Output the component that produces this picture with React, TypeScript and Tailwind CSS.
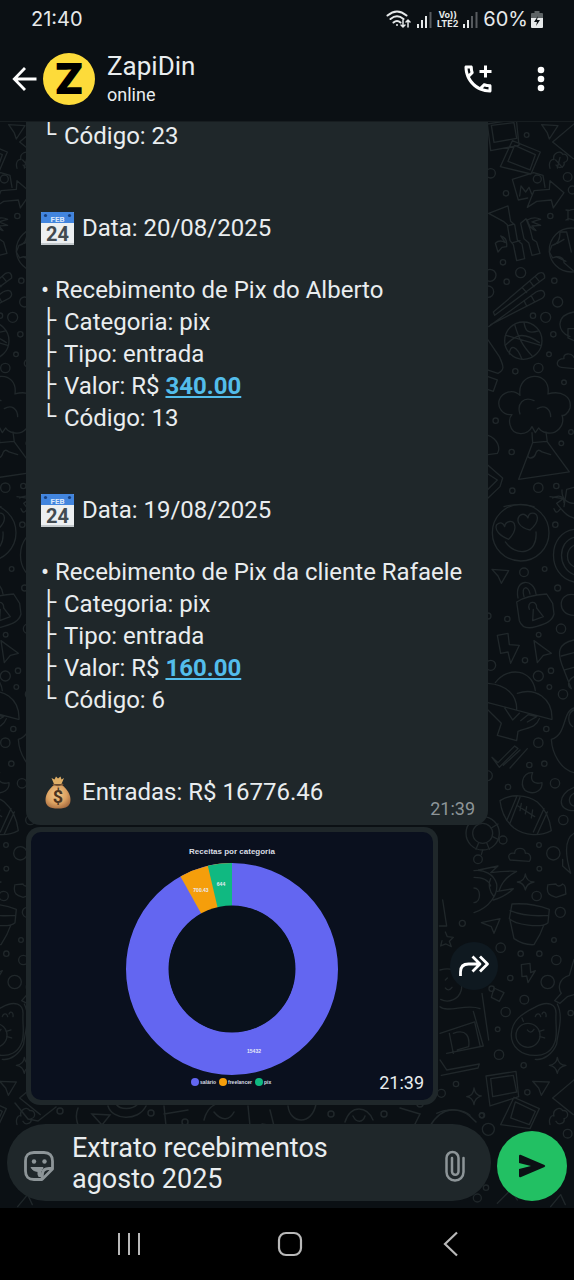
import React from 'react';
import { MdOutlineAddIcCall } from 'react-icons/md';

interface Receipt {
    date: string;
    title: string;
    category: string;
    type: string;
    value: string;
    code: string;
}

const receipts: Receipt[] = [
    { date: '20/08/2025', title: 'Recebimento de Pix do Alberto', category: 'pix', type: 'entrada', value: '340.00', code: '13' },
    { date: '19/08/2025', title: 'Recebimento de Pix da cliente Rafaele', category: 'pix', type: 'entrada', value: '160.00', code: '6' },
];

// Small circles scattered between the doodles: [x, y, r]
const dotsTop = [
    [158, 75, 7], [190, 207, 12], [96, 250, 8], [50, 190, 14], [281, 201, 13], [229, 318, 8], [87, 457, 8], [140, 488, 15],
    [98, 515, 8], [48, 496, 18], [42, 545, 17], [241, 512, 8], [251, 576, 15], [177, 617, 8], [215, 622, 15], [238, 673, 8],
    [225, 733, 7], [193, 774, 14], [124, 784, 8], [270, 817, 7], [65, 932, 8], [262, 1000, 7], [113, 1026, 8], [291, 966, 7],
    [115, 1142, 8], [193, 1133, 14], [247, 1128, 8], [295, 240, 12],
];

const dotsMiddle = [
    [244, 134, 8], [212, 267, 7], [150, 277, 13], [251, 324, 9], [100, 417, 8], [261, 446, 14], [194, 464, 7], [153, 541, 8],
    [50, 556, 15], [193, 588, 15], [231, 572, 8], [226, 621, 7], [267, 643, 14], [217, 747, 8], [193, 788, 14], [166, 855, 8],
    [211, 851, 8], [243, 910, 14], [102, 921, 8], [268, 1020, 14], [238, 1120, 20], [195, 1095, 7], [196, 1166, 7],
    [40, 887, 15], [42, 408, 9],
];

const dotsBottom = [
    [188, 228, 14], [259, 277, 15], [240, 360, 7], [80, 383, 14], [140, 401, 8], [196, 401, 8], [247, 420, 14], [109, 474, 8],
    [221, 486, 20], [151, 539, 13], [95, 576, 14], [71, 628, 7], [290, 579, 8], [75, 704, 14], [149, 736, 8], [160, 817, 8],
    [23, 886, 7], [43, 928, 18], [281, 941, 13], [36, 1103, 8], [10, 1134, 12], [53, 506, 8],
];

const Dots: React.FC<{ items: number[][] }> = ({ items }) => (
    <>
        {items.map(([cx, cy, r]) => (
            <circle key={`${cx}-${cy}`} cx={cx} cy={cy} r={r} />
        ))}
    </>
);

const Wallpaper: React.FC = () => (
    <svg className="absolute inset-0 h-full w-full" aria-hidden="true">
        <g id="doodles" fill="none" stroke="#20272a" strokeWidth="4" strokeLinejoin="round" strokeLinecap="round">
            <g transform="translate(474 -12) scale(.3333)">
                <Dots items={dotsTop} />
                {/* photos */}
                <path d="M40 42 127 28l8 78-85 16zM52 46l68-8 8 47-68 12zM115 92l84 34-28 66-92-22zM122 106l62 28-16 46-66-26z" />
                <path d="M203 44l49 3-26 40-6-18zM236 96l64-54M236 96l62 50M228 175c-6-20 6-30 12-26-6-20 20-30 26-16 18-4 20 22 4 24 4 14-16 22-24 8M245 150l20 22M258 142l-8 32" />
                {/* torn card and arrow */}
                <path d="M115 208l64-20 28 8 6 36M115 208l18 62 28-6M137 258l4-30 14 18 10-14 8 20M160 292l20-50 46-4 2-26 42 36-32 46-6-24-44 4z" />
                {/* bamboo */}
                <path d="M44 310l58-22 8 46 12 10 8 46 14 12 8 44-24 6-10-48-10-12-8-48-12-10z M100 348l20-6M116 398l22-6M140 340l16-14 12 30 8 32 12 8 10 34-24 6-10-38-14-12zM160 330c14-8 28-8 40-2-12 2-20 6-26 8l26 10-26 2 12 14c-14-4-22-12-26-32M64 400c10-10 20-8 30-2l-14-20c16 4 20 14 18 32l-14 2-12 14z" />
                <path d="M276 300c16 4 8-2 24-2M276 330c10-8 14-2 24 0M282 300v30" />
                {/* beach ball */}
                <circle cx="292" cy="420" r="66" />
                <path d="M258 366c0 30-10 38-24 40l-8 20 10 18c20-8 34-2 34 14l28 24M258 366l20 0 14 60M250 400l20-12M246 440l30 14" />
                {/* chopsticks */}
                <path d="M58 606 194 490q18-8 18 14L62 616zM44 650 186 546q24-12 26 8-2 10-14 14L50 644M146 534l12 14M168 514l12 16M184 500l12 14M150 572l8 16M172 558l10 18" />
                {/* basketball */}
                <circle cx="148" cy="692" r="56" />
                <path d="M122 644c12 40 22 62 54 96M94 706c30-30 50-44 102-8M96 676l104 30M150 637c4 30 16 34 44 26M106 732c2-30 22-26 38 16" />
                <path d="M42 690l34 50c14 30 16 40-4 50l-32-10M42 800l28 10-12 34-18-6M300 606c-56 10-52 60-12 74M282 656h18M282 656v28l18 8M300 742c-8-14-34-14-30 4-24 0-26 24-8 26l38 4" />
                {/* cloud over the volcano */}
                <path d="M138 856c-10-72 94-78 84-4 40-12 72 8 66 42-6 20-20 24-24 22 10 30-16 60-48 52-14-2-18-8-22-14l-10 14-10-18c-12 28-58 30-66-6-4-16 0-24 6-30-32 2-44-26-38-44 8-22 40-36 62-14M138 912c-10-30 10-54 42-40M190 896c22-14 40 2 40 24" />
                <path d="M174 968l2 30-42 110 152-22-66-90-4-30M176 998l42-4M176 998l-14 38c-2 10 16 12 22-2 4-16 12-16 20-8l26 8" />
                <path d="M42 976c30 10 38 40 28 54l-28 4M42 1066l44 38-8 26-36 34M42 1092l28 18-28 28M236 1164c20-10 34-6 34 14M270 1190l8-52 22-6M90 1190c30-8 60-8 90 0" />
            </g>
            <g transform="translate(474 358) scale(.3333)">
                <Dots items={dotsMiddle} />
                {/* smiley with heart eyes */}
                <circle cx="140" cy="158" r="85" />
                <path d="M104 178c-26-10-44-28-36-44 12-10 20-4 24 6 2-18 28-22 30-4 4 16-10 34-18 42M168 150c-34-8-42-28-32-42 10-10 22-4 26 6 2-20 26-18 28-2 2 18-12 30-22 38M94 186c30 44 98 40 92-30" />
                <path d="M228 50l40 6-20 14c30 40 40 40 52 44M240 86c8 20 14 6 20 0M264 30c-2 30 20 40 36 40M300 148c-80 10-84 140 0 158M300 172c-50 14-50 92 0 112M300 196c-26 14-26 52 0 64" />
                <path d="M54 268l50 4-22 38-10-22zM300 344c-50-8-52 62 0 62" />
                {/* padlock */}
                <path d="M132 354c-12-60 48-60 54-12M150 350c-10-34 14-34 18-8M128 366c20-14 60-22 90-24l18 28 4 32c-6 24-28 30-54 38-26 8-42 4-50-18zM166 388c-10-24 24-30 22-4l20 26-32 12 2-34" />
                <path d="M70 466l32-6 4 34 30 2-26 54-8-34-22 4zM180 482l52 38-24 6-18 22zM300 480c-50 10-50 40-34 80l26 66M262 528l38-10M272 570l28-8M300 590c-20 10-20 30-8 36" />
                {/* umbrella */}
                <path d="M64 608c40-52 112-38 120 24M42 610c54 4 88 34 86 80M130 640c54-18 106 14 104 78M42 668l190 50M42 690l40 40-12 36 58 16 4-28c30-12 54-10 64-38M92 684l24 36 20-20M140 722l22-18 26 6-28 16" />
                <path d="M54 832l18 16 50-50 10 8-56 56zM88 856l50-46M108 864l52-58M300 684c-36 10-20 80-68 94 2 40 26 90 68 100M300 690c-20 8-20 40-4 50" />
                <path d="M176 878c-34-4-42 50-14 58 22 8 44-6 42-28-30 8-36-12-28-30" />
                {/* rugby ball */}
                <path d="M78 962c30-20 80-20 112 4 28 24 38 56 42 86-32 18-80 16-112-8-28-22-38-50-42-82zM128 950l-30 72M138 952l-30 78M210 986l-32 70M220 996l-30 66M132 978l50 32M142 970l-4 22M158 980l-4 22M176 990l-4 24" />
                <path d="M300 922c-50 20-52 70 0 70M300 940c-18 10-18 30-2 38M108 1140c-10-16 2-22 14-20 0-20 32-20 32 0 14-4 20 14 12 24zM300 1060c-34 20-22 80-10 120l-24-22v-20" />
            </g>
            <g transform="translate(474 698) scale(.3333)">
                <Dots items={dotsBottom} />
                {/* turtle */}
                <circle cx="26" cy="40" r="50" />
                <circle cx="26" cy="40" r="30" />
                <circle cx="87" cy="60" r="12" />
                <circle cx="12" cy="118" r="13" />
                <path d="M52 24l20-12M56 50l20 10M38 68l8 20M14 68 6 88M26 90l-4 14" />
                {/* fish */}
                <path d="M0 152c30-4 60 10 68 40 4 30-20 70-68 86M0 172c24 0 44 8 50 26M50 176c-8 16-4 40 10 54M0 204c22 0 22 42 0 44M14 150l58-12-22 20q40-6 78-4-40 20-52 56M70 214l48-8q-24 24-60 34" />
                <path d="M154 162q4 24 26 24-22 4-26 24-4-22-24-24 22-2 24-24M226 194l20-2c4 10 14 6 20 0 14 6 6 20 10 30l-30 10c-14-4-32-8-24-38M22 308l56-12-18 44-8-20z" />
                {/* flower pot */}
                <path d="M114 252q60-4 112 16l-4 40c-20 18-100 6-116-12zM108 272q50 20 116 14M108 300l12 56q30 20 60 18 20-30 30-60" />
                <path d="M142 434l26-4 2 28 14-6-22 36-4-20-14 2zM60 504l30 14-14 26-24-12zM300 418l-14 48c-34 10-34 40-24 54l-20 22 16 8 22-20 20-6" />
                {/* avocado */}
                <path d="M182 562c40-22 66-10 64 22-2 30 6 60-4 84-12 32-40 40-60 38-40 0-72-26-70-64 2-40 30-60 70-80zM250 552c20 40 0 90-2 120-12 30-40 50-64 46" />
                <circle cx="162" cy="646" r="36" />
                <path d="M184 590c4-12 14-10 16 0M204 582c6-12 14-2 12 8M160 630q10 14 20-2M196 634l14-4M198 650l14 4M148 604l-4-10M24 520l20 140M250 712q4 24 26 24-22 4-26 24-4-22-24-24 22-2 24-24" />
                <path d="M36 768 126 754l8 76-86 28zM50 776l68-10 10 50-72 14zM120 832l76 34-28 60-88-12zM124 846l60 28-18 40-56-20zM176 784l50 2-24 40-8-22zM236 834l64-54M236 834l62 50M228 914c-6-20 6-30 12-26-6-20 20-30 26-16 18-4 20 22 4 24 4 14-16 22-24 8M70 1150l40-40 20 30M230 1160l30-36 14 30" />
            </g>
        </g>
        <use href="#doodles" x="-533" />
        {/* row showing through under the chart bubble */}
        <g transform="translate(0 978)" fill="none" stroke="#20272a" strokeWidth="1.5" strokeLinecap="round">
            <path d="M15 3l13 16 10 2 18-14M78 8c-4 10 0 20 6 26M92 14l18 1-8 10zM108 6c4 14 30 16 38 0M116 4c4 6 16 6 22 0M164 6l2 20M164 14l24-4M204 20c4-16 16-18 22-18M214 12c8 10 16 8 20 0M248 6l2 20M262 24l12 2-4-16M288 6c2 18 24 20 28-2M345 22c6-18 22-16 28-2M353 16c4 8 10 6 12 0M430 26c12-20 30-22 46-4M400 8l20 6-6 12" />
            <circle cx="60" cy="11" r="3" />
            <circle cx="151" cy="13" r="3" />
            <circle cx="185" cy="22" r="3" />
            <circle cx="331" cy="14" r="3" />
            <circle cx="384" cy="14" r="3" />
            <circle cx="420" cy="4" r="3" />
        </g>
        {/* drawings behind the forward button */}
        <g transform="translate(400 778) scale(.3333)" fill="none" stroke="#20272a" strokeWidth="4" strokeLinecap="round" strokeLinejoin="round">
            <path d="M128 0l12 78-22 0M136 96l6 14 18 2-12 12 6 16-16-8-16 6 4-16M120 210c50-14 70 20 64 60-8 30-40 40-62 28M136 240l6-6M156 262q-10 14-20 2M120 320c20 20 80-10 120 6M220 334l30 104-110 22M120 400l104-34 16 70M148 400l12 60M160 400c40-14 50 10 46 40l-34 10M120 480l20 30 98-18-4 12-110 22" />
            <path d="M222 564q4 24 22 24-20 6-22 26-4-22-22-24 20-2 22-26M110 640c30-14 80-14 100 6" />
            <circle cx="187" cy="70" r="9" />
            <circle cx="168" cy="552" r="8" />
            <circle cx="124" cy="580" r="12" />
            <circle cx="246" cy="646" r="8" />
        </g>
    </svg>
);

const StatusBar: React.FC = () => (
    <div className="flex h-[38px] items-center justify-between pl-[31px] pr-[31px] font-['Inter',sans-serif] text-xl text-[#e6e9ea]">
        <span>21:40</span>
        <div className="flex items-center gap-[5px]">
            <svg width="26" height="20" viewBox="0 0 26 20" fill="none" stroke="currentColor" strokeWidth="2" strokeLinecap="round">
                <path d="M1.500 6.500q9.500-8 19 0M4.500 10q6.500-5.500 13 0M7.500 13.500q3.500-3 7 0" />
                <circle cx="11" cy="16" r="1" fill="currentColor" stroke="none" />
                <path d="M17 11v7M15 16l2 2 2-2M22 18v-7M20 13l2-2 2 2" strokeWidth="1.500" />
            </svg>
            <svg width="15" height="17" viewBox="0 0 15 17" fill="currentColor">
                <path d="M0 13h2v4H0zM4 9h2v8H4zM8 5h2v12H8z" />
                <path d="M12.500 1h2v16h-2z" opacity=".35" />
            </svg>
            <div className="flex flex-col items-center text-[9px] font-bold leading-[9px]">
                <span>Vo))</span>
                <span>LTE2</span>
            </div>
            <svg width="15" height="17" viewBox="0 0 15 17" fill="currentColor">
                <path d="M0 13h2v4H0zM4 9h2v8H4z" />
                <path d="M8 5h2v12H8zM12.500 1h2v16h-2z" opacity=".35" />
            </svg>
            <span>60%</span>
            <svg className="-ml-[2px]" width="12" height="17" viewBox="0 0 12 17">
                <path d="M3.500 0h5v2H11q1 0 1 1v4H0V3q0-1 1-1h2.500z" fill="#5d6365" />
                <path d="M0 7h12v9q0 1-1 1H1q-1 0-1-1z" fill="#e6e9ea" />
                <path d="M7 5l-4 6h3l-1 4 4-6H6z" fill="#0b1014" />
            </svg>
        </div>
    </div>
);

const ChatHeader: React.FC = () => (
    <header className="flex h-[84px] items-center border-b border-[#171d20] pb-[2px] pl-3 pr-[29px]">
        <button type="button" aria-label="Voltar" className="text-white">
            <svg width="26" height="26" viewBox="0 0 26 26" fill="none" stroke="currentColor" strokeWidth="2.800">
                <path d="M24.500 13H2.500M13 2 2.300 13 13 24" />
            </svg>
        </button>
        <div className="ml-[5px] flex h-[52px] w-[52px] items-center justify-center rounded-full bg-[#fddb3a] font-['Inter',sans-serif] text-[42px] font-black leading-none text-black">
            Z
        </div>
        <div className="ml-3 flex-1 text-[#e9edef]">
            <h1 className="text-[26px] leading-[32px]">ZapiDin</h1>
            <p className="text-[18px] leading-[26px]">online</p>
        </div>
        <button type="button" aria-label="Adicionar à ligação" className="text-white">
            <MdOutlineAddIcCall size={36} />
        </button>
        <button type="button" aria-label="Mais opções" className="ml-[41px] p-1 text-white">
            <svg className="-mx-1" width="8" height="26" viewBox="0 0 8 26" fill="currentColor">
                <circle cx="4" cy="4" r="3.300" />
                <circle cx="4" cy="13" r="3.300" />
                <circle cx="4" cy="22" r="3.300" />
            </svg>
        </button>
    </header>
);

const CalendarEmoji: React.FC = () => (
    <svg width="33" height="33" viewBox="0 0 33 33" role="img" aria-label="Calendário">
        <rect width="33" height="33" rx="1" fill="#eceff1" />
        <path d="M1 0h31q1 0 1 1v10H0V1q0-1 1-1z" fill="#4285de" />
        <circle cx="4.500" cy="3.500" r="1.600" fill="#173f7c" />
        <circle cx="28.500" cy="3.500" r="1.600" fill="#173f7c" />
        <text x="16.500" y="9.500" textAnchor="middle" fontSize="8" fontWeight="700" fill="#dbe8fb">FEB</text>
        <text x="16.500" y="29" textAnchor="middle" fontSize="20" fontWeight="700" fill="#424a50">24</text>
        <path d="M0 31h33v2H0z" fill="#c3c9cc" />
    </svg>
);

const MoneyBagEmoji: React.FC = () => (
    <svg width="33" height="33" viewBox="0 0 33 33" role="img" aria-label="Saco de dinheiro">
        <defs>
            <radialGradient id="bag" cx=".45" cy=".4" r=".65">
                <stop offset="0" stopColor="#f3c98b" />
                <stop offset=".6" stopColor="#dca262" />
                <stop offset="1" stopColor="#a66b3f" />
            </radialGradient>
        </defs>
        <path d="M13 8 10.500 2l3 1.500L15 .5l2 2 2.500-2 1 3L23 2l-2.500 6z" fill="#dfae66" />
        <path d="M13 9h8c5 4 8.500 9 8.500 15 0 6-4 8.500-12.500 8.500S4.500 30 4.500 24C4.500 18 8 13 13 9z" fill="url(#bag)" />
        <path d="M12.500 8.500q4.500 1.500 9 0" fill="none" stroke="#7d5633" strokeWidth="1.800" strokeLinecap="round" />
        <text x="17" y="27" textAnchor="middle" fontSize="18" fontWeight="700" fill="#4b3420">$</text>
    </svg>
);

const Branch: React.FC<{ last?: boolean; children: React.ReactNode }> = ({ last = false, children }) => (
    <p className="flex h-8 items-center">
        <span className="w-[23px] shrink-0 font-['Liberation_Mono',monospace] text-[25px] leading-8">{last ? '└' : '├'}</span>
        <span>{children}</span>
    </p>
);

const ReceiptBlock: React.FC<{ receipt: Receipt }> = ({ receipt }) => (
    <section className="pt-[60px]">
        <p className="mb-[30px] flex h-8 items-center gap-2">
            <CalendarEmoji />
            <span>Data: {receipt.date}</span>
        </p>
        <p>• {receipt.title}</p>
        <Branch>Categoria: {receipt.category}</Branch>
        <Branch>Tipo: {receipt.type}</Branch>
        <Branch>
            Valor: R${' '}
            <a href="#valor" className="font-bold text-[#53bdeb] underline decoration-2 underline-offset-2">{receipt.value}</a>
        </Branch>
        <Branch last>Código: {receipt.code}</Branch>
    </section>
);

const CategoryChart: React.FC = () => (
    <svg className="block w-full rounded-[10px] bg-[#0a101e]" viewBox="0 0 402 268" fontFamily="Liberation Sans, sans-serif">
        <text x="201" y="22" textAnchor="middle" fontSize="8" fontWeight="700" fill="#d9dde4">Receitas por categoria</text>
        <circle cx="201" cy="137" r="84.500" fill="none" stroke="#6366f1" strokeWidth="43" />
        <path d="M201 31A106 106 0 0 0 149.500 44.400L170.400 82 201 137z" fill="#f59e0b" />
        <path d="M201 31A106 106 0 0 0 176.800 33.800L201 137z" fill="#10b981" />
        <circle cx="201" cy="137" r="63.500" fill="#09111c" />
        <g fontSize="5" fontWeight="700" fill="#e8eaf6" textAnchor="middle">
            <text x="170" y="60">700.43</text>
            <text x="190" y="54">644</text>
            <text x="223" y="221">15432</text>
        </g>
        <circle cx="164" cy="250" r="4" fill="#6366f1" />
        <circle cx="192" cy="250" r="4" fill="#f59e0b" />
        <circle cx="228" cy="250" r="4" fill="#10b981" />
        <g fontSize="5" fontWeight="700" fill="#d9dde4">
            <text x="169" y="252">salário</text>
            <text x="197" y="252">freelancer</text>
            <text x="233" y="252">pix</text>
        </g>
    </svg>
);

const Composer: React.FC = () => (
    <form className="relative flex items-center gap-[6px] px-[7px] pb-[7px]" onSubmit={(e) => e.preventDefault()}>
        <div className="flex flex-1 items-center rounded-[39px] bg-[#1f272a] pb-[6px] pl-4 pr-[25px] pt-[9px]">
            <button type="button" aria-label="Figurinhas" className="mt-1 text-[#8d9598]">
                <svg width="32" height="32" viewBox="0 0 32 32" fill="none" stroke="currentColor" strokeWidth="2.800" strokeLinejoin="round">
                    <path d="M11 2.500h10q8.500 0 8.500 8.500v8L19 29.500h-8q-8.500 0-8.500-8.500V11q0-8.500 8.500-8.500z" />
                    <path d="M29 18.500h-3q-6 0-6.500 5l-.5 5.500" />
                    <path d="M8 17.500h12l-2 4v5q-3 1-3-2v-3q-5 0-7-4z" fill="currentColor" strokeWidth="1" />
                    <circle cx="11" cy="11.500" r="2.200" fill="currentColor" stroke="none" />
                    <circle cx="21.500" cy="11.500" r="2.200" fill="currentColor" stroke="none" />
                </svg>
            </button>
            <textarea
                aria-label="Mensagem"
                rows={2}
                defaultValue={'Extrato recebimentos\nagosto 2025'}
                className="ml-[17px] block min-w-0 flex-1 resize-none overflow-hidden bg-transparent text-[27px] leading-[31px] text-[#e9edef] outline-none"
            />
            <button type="button" aria-label="Anexar" className="mt-1 text-[#8d9598]">
                <svg width="22" height="32" viewBox="0 0 22 32" fill="none" stroke="currentColor" strokeWidth="2.500" strokeLinecap="round">
                    <path d="M19.500 8v14a8.500 8.500 0 0 1-17 0V8a6 6 0 0 1 12 0v13.500a3 3 0 0 1-6.500 0V8" />
                </svg>
            </button>
        </div>
        <button type="submit" aria-label="Enviar" className="mt-[7px] flex h-[70px] w-[70px] items-center justify-center rounded-full bg-[#22c063] text-[#0b1014]">
            <svg width="28" height="24" viewBox="0 0 28 24" fill="currentColor">
                <path d="M2.500.8 26.500 11q1.500 1 0 2L2.500 23.200Q1 23.500 1 22v-7l12-3L1 9V2Q1 .5 2.500.8z" />
            </svg>
        </button>
    </form>
);

const NavigationBar: React.FC = () => (
    <nav className="flex h-[72px] items-center justify-between bg-black pl-[115px] pr-[109px] text-[#b9b9b9]">
        <button type="button" aria-label="Recentes">
            <svg width="28" height="28" viewBox="0 0 28 28" fill="none" stroke="currentColor" strokeWidth="2">
                <path d="M4 3v22M14 3v22M24 3v22" />
            </svg>
        </button>
        <button type="button" aria-label="Início">
            <svg width="28" height="28" viewBox="0 0 28 28" fill="none" stroke="currentColor" strokeWidth="2.200">
                <rect x="3" y="3" width="22" height="22" rx="7" />
            </svg>
        </button>
        <button type="button" aria-label="Voltar ao app anterior">
            <svg width="28" height="28" viewBox="0 0 28 28" fill="none" stroke="currentColor" strokeWidth="2.200">
                <path d="M20 2.500 8 14l12 11.500" />
            </svg>
        </button>
    </nav>
);

const App: React.FC = () => {
    return (
        <div className="flex h-screen flex-col bg-[#0b1014] font-['Roboto',sans-serif]">
            <StatusBar />
            <ChatHeader />
            <div className="relative flex min-h-0 flex-1 flex-col">
                <Wallpaper />
                <main className="relative flex min-h-0 flex-1 flex-col justify-end overflow-hidden pb-[19px] pl-[26px]">
                    <article className="w-[462px] max-w-full rounded-b-[14px] bg-[#1f272a] pb-[5px] pl-[15px] pr-[13px] text-[24px] leading-8 text-[#e9edef]">
                        <Branch last>Código: 23</Branch>
                        {receipts.map((receipt) => (
                            <ReceiptBlock key={receipt.code} receipt={receipt} />
                        ))}
                        <div className="mt-[60px] flex h-11 items-start justify-between">
                            <p className="flex h-8 items-center gap-2">
                                <MoneyBagEmoji />
                                <span>Entradas: R$ 16776.46</span>
                            </p>
                            <time className="self-end text-[18px] leading-[22px] text-[#8d9598]">21:39</time>
                        </div>
                    </article>
                    <div className="mt-[2px] flex items-center gap-3">
                        <article className="relative w-[412px] rounded-[14px] bg-[#1f272a] p-[5px]">
                            <CategoryChart />
                            <time className="absolute bottom-[11px] right-[14px] text-[18px] leading-[22px] text-[#e9edef]">21:39</time>
                        </article>
                        <button type="button" aria-label="Encaminhar" className="flex h-12 w-12 items-center justify-center rounded-full bg-[#0f1920] text-white">
                            <svg width="32" height="24" viewBox="0 0 32 24" fill="none" stroke="currentColor" strokeWidth="2.800" strokeLinejoin="round">
                                <path d="M2.500 22v-4q0-8 8-8H21M14.500 2.500l7.500 7.500-7.500 7.500M22 2.500l7.500 7.500-7.500 7.500" />
                            </svg>
                        </button>
                    </div>
                </main>
                <Composer />
            </div>
            <NavigationBar />
        </div>
    );
};

export default App;
